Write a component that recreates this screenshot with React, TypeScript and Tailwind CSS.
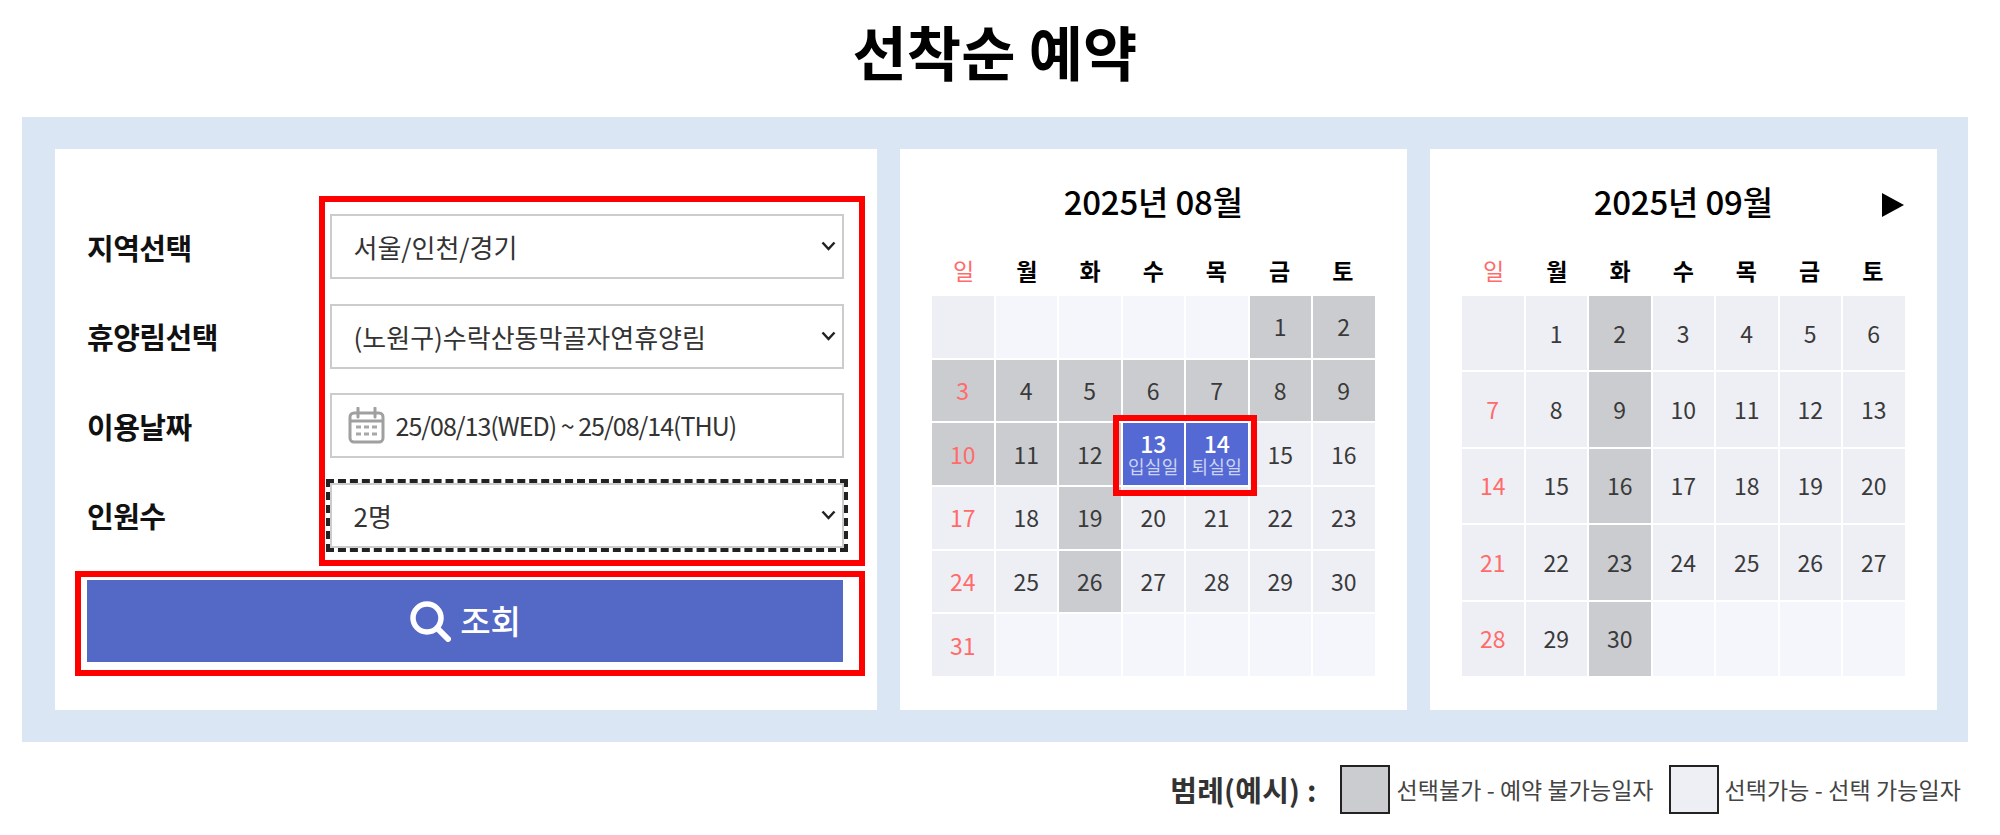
import React from 'react';

type CalendarProps = {
  title: string;
  days: (number | null)[];
  blocked: number[];
  selected?: Record<number, string>;
  rows: string;
  hasNext?: boolean;
};

const weekdays = ['일', '월', '화', '수', '목', '금', '토'];

const august = [
  null, null, null, null, null, 1, 2,
  3, 4, 5, 6, 7, 8, 9,
  10, 11, 12, 13, 14, 15, 16,
  17, 18, 19, 20, 21, 22, 23,
  24, 25, 26, 27, 28, 29, 30,
  31, null, null, null, null, null, null,
];

const september = [
  null, 1, 2, 3, 4, 5, 6,
  7, 8, 9, 10, 11, 12, 13,
  14, 15, 16, 17, 18, 19, 20,
  21, 22, 23, 24, 25, 26, 27,
  28, 29, 30, null, null, null, null,
];

const Calendar: React.FC<CalendarProps> = ({ title, days, blocked, selected = {}, rows, hasNext }) => {
  return (
    <div className="relative w-[506.5px] bg-white px-[32px] pt-[30px]">
      {/* Month title */}
      <div className="relative h-[44px] text-center text-[33px] leading-[44px] font-medium tracking-[-0.2px] text-black">
        {title}
        {hasNext && (
          <svg className="absolute right-[1px] top-[14px] h-[24px] w-[22px]" viewBox="0 0 22 24">
            <polygon points="0,0 22,12 0,24" fill="#000" />
          </svg>
        )}
      </div>

      {/* Weekdays */}
      <div className="mt-[32px] grid h-[41px] grid-cols-7 items-start text-center text-[23px] leading-[30px] font-bold">
        {weekdays.map((day, index) => (
          <div key={day} className={index === 0 ? 'font-normal text-[#ff6b6b]' : 'text-black'}>
            {day}
          </div>
        ))}
      </div>

      {/* Days */}
      <div className={`grid h-[380px] grid-cols-7 gap-[2px] ${rows}`}>
        {days.map((day, index) => {
          const label = day ? selected[day] : undefined;
          const isBlocked = day !== null && blocked.includes(day);
          let tone = 'bg-[#eeeff4] text-[#3a3a3a]';
          if (isBlocked) tone = 'bg-[#cbccd0] text-[#3a3a3a]';
          if (day === null && index % 7 !== 0) tone = 'bg-[#f4f6fb]';
          if (label) tone = 'bg-[#5469d4] text-white';
          if (index % 7 === 0 && !label) tone = tone.replace('text-[#3a3a3a]', 'text-[#ff6b6b]');

          return (
            <div key={index} className={`flex flex-col items-center justify-center text-[23px] ${tone}`}>
              <span className={label ? 'text-[23px] leading-[23px] font-medium' : 'leading-none'}>{day}</span>
              {label && <span className="text-[18px] leading-[22px] tracking-[0.3px] text-[#ccd3f2]">{label}</span>}
            </div>
          );
        })}
      </div>

      {/* Selected range marker */}
      {Object.keys(selected).length > 0 && (
        <div className="absolute left-[213px] top-[266px] h-[81px] w-[144px] border-[6px] border-[#ff0000]" />
      )}
    </div>
  );
};

const Field: React.FC<{ label: string; children: React.ReactNode }> = ({ label, children }) => (
  <div className="flex h-[65px] items-center">
    <div className="w-[242.5px] pt-[2px] text-[29px] font-bold tracking-[-0.5px] text-[#111111]">{label}</div>
    {children}
  </div>
);

const Select: React.FC<{ value: string; focused?: boolean }> = ({ value, focused }) => (
  <div className="relative">
    <select
      className={`block h-[65px] w-[514px] appearance-none border-2 border-[#cccccc] bg-white pl-[22px] text-[26px] text-[#333333] ${
        focused ? 'outline-4 outline-dashed outline-[#222222]' : ''
      }`}
      defaultValue={value}
    >
      <option value={value}>{value}</option>
    </select>
    <svg
      className="pointer-events-none absolute right-[8px] top-[27px] h-[10px] w-[15px]"
      viewBox="0 0 15 10"
      fill="none"
    >
      <path d="M1.5 1.5L7.5 8L13.5 1.5" stroke="#222222" strokeWidth="2.5" />
    </svg>
  </div>
);

const App: React.FC = () => {
  return (
    <div className="h-[835px] overflow-hidden bg-white font-['Noto_Sans_CJK_KR',sans-serif]">
      <h1 className="flex h-[117px] w-[1990px] items-center justify-center pb-[14px] text-[59px] font-bold text-black">
        선착순 예약
      </h1>

      <div className="ml-[22px] flex h-[625px] w-[1946px] gap-[23.5px] bg-[#dbe6f4] py-[32px] pl-[33px]">
        {/* Search form */}
        <div className="relative w-[821.5px] bg-white pl-[32px] pt-[65px]">
          <div className="flex flex-col gap-[24.5px]">
            <Field label="지역선택">
              <Select value="서울/인천/경기" />
            </Field>
            <Field label="휴양림선택">
              <Select value="(노원구)수락산동막골자연휴양림" />
            </Field>
            <Field label="이용날짜">
              <div className="flex h-[65px] w-[514px] items-center border-2 border-[#cccccc] pl-[16px]">
                <svg className="h-[37px] w-[37px] shrink-0" viewBox="0 0 37 37" fill="none">
                  <rect x="2" y="6" width="33" height="29" rx="4" stroke="#a0a0a0" strokeWidth="3" />
                  <path d="M2 14h33" stroke="#a0a0a0" strokeWidth="3" />
                  <path d="M10 1v9M27 1v9" stroke="#a0a0a0" strokeWidth="3" strokeLinecap="round" />
                  <path d="M8 20h5M16 20h5M24 20h5M8 27h5M16 27h5M24 27h5" stroke="#a8a8a8" strokeWidth="3" />
                </svg>
                <span className="ml-[11px] text-[25px] tracking-[-1px] whitespace-nowrap text-[#333333]">
                  25/08/13(WED) ~ 25/08/14(THU)
                </span>
              </div>
            </Field>
            <Field label="인원수">
              <Select value="2명" focused />
            </Field>
          </div>

          <button className="mt-[32px] flex h-[82px] w-[756px] items-center justify-center gap-[9px] bg-[#5468c6] text-[33px] font-medium text-white">
            <svg className="h-[42px] w-[42px]" viewBox="0 0 42 42" fill="none">
              <circle cx="18" cy="18" r="14" stroke="#fff" strokeWidth="5.5" />
              <path d="M28.5 28.5L39 39" stroke="#fff" strokeWidth="6" strokeLinecap="round" />
            </svg>
            조회
          </button>

          {/* Highlight boxes */}
          <div className="absolute left-[264px] top-[47px] h-[370px] w-[546px] border-[6px] border-[#ff0000]" />
          <div className="absolute left-[20px] top-[422px] h-[105px] w-[790px] border-[6px] border-[#ff0000]" />
        </div>

        <Calendar
          title="2025년 08월"
          days={august}
          blocked={[1, 2, 3, 4, 5, 6, 7, 8, 9, 10, 11, 12, 19, 26]}
          selected={{ 13: '입실일', 14: '퇴실일' }}
          rows="grid-rows-6"
        />
        <Calendar
          title="2025년 09월"
          days={september}
          blocked={[2, 9, 16, 23, 30]}
          rows="grid-rows-5"
          hasNext
        />
      </div>

      {/* Legend */}
      <div className="ml-[-1px] mt-[23px] flex items-center justify-end pr-[39px]">
        <span className="mr-[23px] text-[29px] font-bold tracking-[0.2px] whitespace-nowrap text-[#333333]">범례(예시) :</span>
        <span className="h-[49px] w-[50px] border-2 border-[#222222] bg-[#cbccd0]" />
        <span className="ml-[7px] mr-[15px] text-[23px] tracking-[0.05px] text-[#444444]">선택불가 - 예약 불가능일자</span>
        <span className="h-[49px] w-[50px] border-2 border-[#222222] bg-[#eeeff4]" />
        <span className="ml-[6px] text-[23px] tracking-[0.1px] text-[#444444]">선택가능 - 선택 가능일자</span>
      </div>
    </div>
  );
};

export default App;
